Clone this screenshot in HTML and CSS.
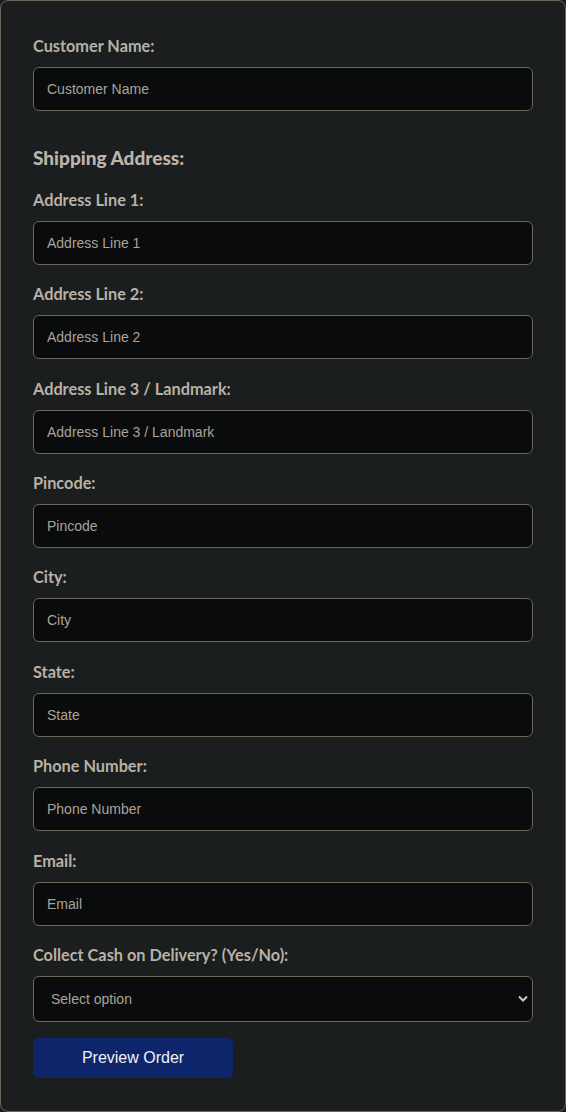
FILE: index.html
```html
<!DOCTYPE html>
<html lang="en">
<head>
<meta charset="utf-8">
<title>Order Form</title>
<link rel="stylesheet" href="styles.css">
</head>
<body>
<form class="card">
  <div class="field">
    <label class="label" for="name">Customer Name:</label>
    <input class="input" id="name" type="text" placeholder="Customer Name">
  </div>
  <h3 class="section">Shipping Address:</h3>
  <div class="field">
    <label class="label" for="a1">Address Line 1:</label>
    <input class="input" id="a1" type="text" placeholder="Address Line 1">
  </div>
  <div class="field">
    <label class="label" for="a2">Address Line 2:</label>
    <input class="input" id="a2" type="text" placeholder="Address Line 2">
  </div>
  <div class="field">
    <label class="label" for="a3">Address Line 3 / Landmark:</label>
    <input class="input" id="a3" type="text" placeholder="Address Line 3 / Landmark">
  </div>
  <div class="field">
    <label class="label" for="pin">Pincode:</label>
    <input class="input" id="pin" type="text" placeholder="Pincode">
  </div>
  <div class="field">
    <label class="label" for="city">City:</label>
    <input class="input" id="city" type="text" placeholder="City">
  </div>
  <div class="field">
    <label class="label" for="state">State:</label>
    <input class="input" id="state" type="text" placeholder="State">
  </div>
  <div class="field">
    <label class="label" for="phone">Phone Number:</label>
    <input class="input" id="phone" type="text" placeholder="Phone Number">
  </div>
  <div class="field">
    <label class="label" for="email">Email:</label>
    <input class="input" id="email" type="text" placeholder="Email">
  </div>
  <div class="field">
    <label class="label" for="cod">Collect Cash on Delivery? (Yes/No):</label>
    <div class="select-wrap">
      <select class="select" id="cod">
        <option>Select option</option>
        <option>Yes</option>
        <option>No</option>
      </select>
      <svg class="chev" width="10" height="7" viewBox="0 0 10 7"><path d="M1 1.5 L5 5.5 L9 1.5" fill="none" stroke="#cfc8bd" stroke-width="2"/></svg>
    </div>
  </div>
  <button class="btn" type="button">Preview Order</button>
</form>
</body>
</html>
```
FILE: styles.css
```css
* { box-sizing: border-box; }
html, body { margin: 0; padding: 0; background: #1b1e1f; }
body { width: 566px; height: 1112px; }
.card {
  width: 566px;
  height: 1112px;
  border: 1px solid #6d6558;
  border-radius: 8px;
  background: #1b1e1f;
  padding: 35px 32px 0 32px;
  display: flex;
  flex-direction: column;
}
.field {
  display: flex;
  flex-direction: column;
  margin-bottom: 19.375px;
}
.label {
  font-family: Lato, "Open Sans", sans-serif;
  font-weight: 700;
  font-size: 16.3px;
  line-height: 20px;
  color: #b9b1a6;
  margin-bottom: 11px;
}
.section {
  font-family: Lato, "Open Sans", sans-serif;
  font-weight: 900;
  font-size: 19px;
  line-height: 22px;
  color: #bdb5aa;
  margin: 16.5px 0 21.1px 0;
}
.input, .select {
  width: 500px;
  height: 44px;
  border: 1px solid #6d6558;
  border-radius: 6px;
  background: #0a0b0c;
  color: #aaa49b;
  font-family: "Liberation Sans", Arial, sans-serif;
  font-size: 14px;
  padding: 0 13px;
  outline: none;
}
.input::placeholder { color: #a9a39a; opacity: 1; }
.select-wrap { position: relative; width: 500px; }
.select {
  height: 46px;
  appearance: none;
  -webkit-appearance: none;
  padding-left: 17px;
}
.chev { position: absolute; right: 5px; top: 19px; }
.btn {
  width: 200px;
  height: 40px;
  margin-top: -3.4px;
  border: none;
  border-radius: 6px;
  background: #0f256b;
  color: #f1f1f1;
  font-family: "Liberation Sans", Arial, sans-serif;
  font-size: 16px;
  cursor: pointer;
}
```
